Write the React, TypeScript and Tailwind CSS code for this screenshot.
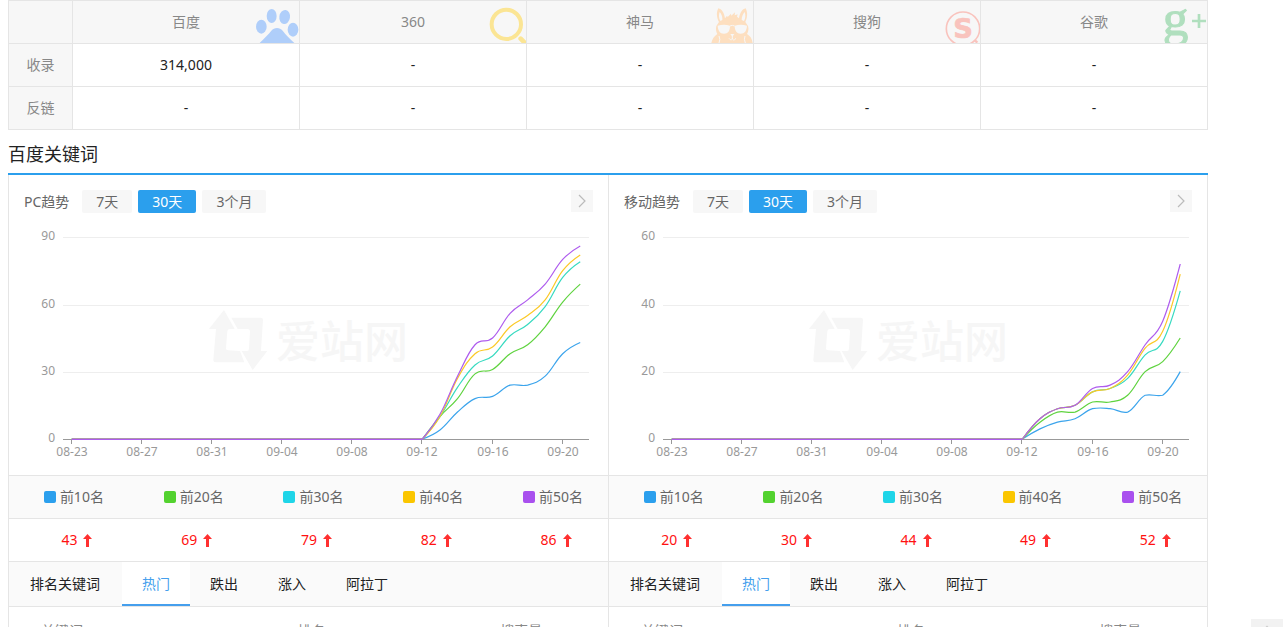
import { ReactNode, useState } from "react";
import clsx from "clsx";

const ENGINES: { name: string; indexed: string; backlinks: string; icon: ReactNode }[] = [
  { name: "百度", indexed: "314,000", backlinks: "-", icon: <BaiduIcon /> },
  { name: "360", indexed: "-", backlinks: "-", icon: <SearchIcon /> },
  { name: "神马", indexed: "-", backlinks: "-", icon: <ShenmaIcon /> },
  { name: "搜狗", indexed: "-", backlinks: "-", icon: <SogouIcon /> },
  { name: "谷歌", indexed: "-", backlinks: "-", icon: <GoogleIcon /> },
];

const LEGEND = [
  { label: "前10名", swatch: "bg-[#2b9fed]", line: "#3ba4ec" },
  { label: "前20名", swatch: "bg-[#53d22f]", line: "#5fd33f" },
  { label: "前30名", swatch: "bg-[#1fd5e8]", line: "#37dac0" },
  { label: "前40名", swatch: "bg-[#fbc600]", line: "#fbc926" },
  { label: "前50名", swatch: "bg-[#a950ee]", line: "#ae5cee" },
];

// values from 09-12 on, one list per legend entry; every day before is 0
const PC_SERIES = [
  [0, 4, 12, 18, 19, 24, 24, 28, 38, 43],
  [0, 10, 18, 29, 31, 38, 42, 50, 61, 69],
  [0, 10, 23, 33, 37, 46, 51, 59, 72, 79],
  [0, 10, 27, 38, 41, 50, 55, 62, 75, 82],
  [0, 11, 28, 42, 45, 56, 62, 69, 80, 86],
];

const MOBILE_SERIES = [
  [0, 3, 5, 6, 9, 9, 8, 13, 13, 20],
  [0, 5, 8, 8, 11, 11, 13, 20, 23, 30],
  [0, 6, 9, 10, 14, 15, 18, 25, 29, 44],
  [0, 6, 9, 10, 14, 15, 19, 27, 32, 49],
  [0, 6, 9, 10, 15, 16, 20, 28, 35, 52],
];

const DATES = ["08-23", "08-27", "08-31", "09-04", "09-08", "09-12", "09-16", "09-20"];
const RANGES = ["7天", "30天", "3个月"];
const TABS = ["热门", "跌出", "涨入", "阿拉丁"];

const ICON_CLASS = "absolute right-0 bottom-0 h-10 w-12";

function BaiduIcon() {
  return (
    <svg viewBox="33 9 144 120" className={ICON_CLASS} fill="#afcefa" aria-hidden="true">
      <ellipse cx="64" cy="80" rx="16" ry="21" />
      <ellipse cx="95" cy="48" rx="15" ry="21" />
      <ellipse cx="134" cy="51" rx="16" ry="21" transform="rotate(8 134 51)" />
      <ellipse cx="159" cy="89" rx="16" ry="21" />
      <path d="M59 129C74 114 86 102 94 92C103 81 119 81 128 92C138 106 150 116 163 129Z" />
    </svg>
  );
}

function SearchIcon() {
  return (
    <svg viewBox="24 9 144 120" className={ICON_CLASS} fill="none" stroke="#fbe594" aria-hidden="true">
      <circle cx="109" cy="73" r="44" strokeWidth="12" />
      <path d="M152 116L170 134" strokeWidth="14" strokeLinecap="round" />
    </svg>
  );
}

function ShenmaIcon() {
  return (
    <svg viewBox="16 9 144 120" className={ICON_CLASS} aria-hidden="true">
      <path
        fill="#fddfc0"
        d="M35 129C38 116 44 108 53 102C49 95 48 88 50 78L58 66C50 52 50 36 56 25C66 27 74 38 76 55L82 47L84 51L94 41L95 47L106 37L105 46L114 43L112 50C114 51 116 53 118 55C120 39 128 27 138 25C145 38 143 54 137 66L145 78C148 88 146 95 142 102C152 108 157 116 159 129Z"
      />
      <path fill="#f7f7f7" d="M60 36C66 43 69 51 68 60L62 63C57 54 57 44 60 36ZM135 36C138 45 138 54 133 63L126 60C126 51 129 42 135 36Z" />
      <path fill="#f7f7f7" d="M54 77Q73 71 91 77C91 92 85 101 73 101C60 101 55 91 54 77ZM105 77Q123 71 142 77C141 92 135 101 123 101C112 101 105 92 105 77Z" />
      <path fill="none" stroke="#f7f7f7" strokeWidth="3" d="M91 78Q98 74 105 78M58 108Q63 118 58 129M136 108Q132 118 137 129M88 115Q97 126 98 113Q100 126 109 115M98 113V105" />
      <path fill="#f7f7f7" d="M92 102H104L98 110Z" />
    </svg>
  );
}

function SogouIcon() {
  return (
    <svg viewBox="7 9 144 120" className={ICON_CLASS} aria-hidden="true">
      <circle cx="100" cy="86" r="50" fill="none" stroke="#f9c3bd" strokeWidth="5" />
      <text x="100" y="115" textAnchor="middle" fontFamily="DejaVu Sans" fontWeight="700" fontSize="82" fill="#f9c3bd" stroke="#f9c3bd" strokeWidth="2">
        S
      </text>
      <path d="M136 121L143 128" stroke="#f9c3bd" strokeWidth="7" />
    </svg>
  );
}

function GoogleIcon() {
  return (
    <svg viewBox="27 9 144 120" className={ICON_CLASS} fill="#b0dfbe" aria-hidden="true">
      <text x="38" y="105" fontFamily="Liberation Serif" fontWeight="400" fontSize="154" stroke="#b0dfbe" strokeWidth="3">
        g
      </text>
      <path d="M143 42H151V59H168V67H151V84H143V67H126V59H143Z" />
    </svg>
  );
}

const CELL = "border border-[#e5e5e5] p-0 text-center font-normal";

const EngineTable = () => (
  <table className="w-full table-fixed border-collapse text-sm">
    <thead>
      <tr className="h-[43px] bg-[#f7f7f7] text-[#888]">
        <td className={clsx(CELL, "w-16")} />
        {ENGINES.map((engine) => (
          <th key={engine.name} scope="col" className={clsx(CELL, "relative overflow-hidden")}>
            {engine.name}
            {engine.icon}
          </th>
        ))}
      </tr>
    </thead>
    <tbody className="text-[#222]">
      <tr className="h-[43px]">
        <th scope="row" className={clsx(CELL, "bg-[#f7f7f7] text-[#888]")}>收录</th>
        {ENGINES.map((engine) => (
          <td key={engine.name} className={CELL}>{engine.indexed}</td>
        ))}
      </tr>
      <tr className="h-[43px]">
        <th scope="row" className={clsx(CELL, "bg-[#f7f7f7] text-[#888]")}>反链</th>
        {ENGINES.map((engine) => (
          <td key={engine.name} className={CELL}>{engine.backlinks}</td>
        ))}
      </tr>
    </tbody>
  </table>
);

const AXIS_LEFT = 54;
const AXIS_RIGHT = 580;
const AXIS_TOP = 24;
const AXIS_BOTTOM = 226;
const DAYS = 30;
const DAY_WIDTH = (AXIS_RIGHT - AXIS_LEFT) / DAYS;

const dayX = (day: number) => AXIS_LEFT + DAY_WIDTH * (day + 0.5);

// lets the curve leave the span between two days by a pixel or so at most
const clamp = (value: number, a: number, b: number) =>
  Math.max(Math.min(a, b) - 1.5, Math.min(Math.max(a, b) + 1.5, value));

const curve = (values: number[], max: number) => {
  const ys = values.map((v) => AXIS_BOTTOM - (v / max) * (AXIS_BOTTOM - AXIS_TOP));
  const slope = (i: number) => {
    if (i === 0 || i === ys.length - 1) return 0;
    return (ys[i + 1] - ys[i - 1]) / 2;
  };
  const first = DAYS - values.length;
  const reach = 0.4;
  let d = `M${dayX(0)} ${AXIS_BOTTOM}L${dayX(first)} ${ys[0]}`;
  for (let i = 0; i < ys.length - 1; i++) {
    const x = dayX(first + i);
    const last = i === ys.length - 2;
    const y1 = clamp(ys[i] + slope(i) * reach, ys[i], ys[i + 1]);
    const y2 = last ? ys[i + 1] : clamp(ys[i + 1] - slope(i + 1) * reach, ys[i], ys[i + 1]);
    const x1 = i === 0 ? x : x + DAY_WIDTH * reach;
    const x2 = last ? x + DAY_WIDTH : x + DAY_WIDTH * (1 - reach);
    d += `C${x1} ${y1} ${x2} ${y2} ${x + DAY_WIDTH} ${ys[i + 1]}`;
  }
  return d;
};

const TrendChart = ({ title, series, max }: { title: string; series: number[][]; max: number }) => (
  <svg viewBox="0 0 598 262" className="block w-full max-w-[598px]" role="img" aria-label={title}>
    <g fill="#f6f6f6">
      <g transform="translate(-9 -43) scale(0.3333)">
        <path d="M672 420L627 477H648L640 570Q640 577 647 577H733L720 543L684 541Q678 541 678 535L682 484Q683 477 690 477H704Z" />
        <path d="M694 443H783Q789 443 789 450L783 543H802L758 600L725 543H741Q747 543 747 536L750 485Q750 477 743 477H713Z" />
      </g>
      <text x="267" y="145" fontSize="44" fontWeight="500">
        爱站网
      </text>
    </g>
    {[226, 159, 92, 24].map((y, step) => (
      <g key={step}>
        <path
          d={`M${AXIS_LEFT} ${y + 0.5}H${AXIS_RIGHT}`}
          stroke={step === 0 ? "#999" : "#eee"}
        />
        <text x="46" y={y + 3} textAnchor="end" fontSize="12" fill="#999">
          {(max / 3) * step}
        </text>
      </g>
    ))}
    {DATES.map((date, i) => {
      const x = Math.round(dayX(i * 4));
      return (
        <g key={date}>
          <path d={`M${x - 0.5} 227V231`} stroke="#999" />
          <text x={x} y="243" textAnchor="middle" fontSize="12" fill="#999">
            {date}
          </text>
        </g>
      );
    })}
    {series.map((values, i) => (
      <path key={i} d={curve(values, max)} fill="none" stroke={LEGEND[i].line} strokeWidth="1.2" />
    ))}
    <path
      d={`M${dayX(0)} ${AXIS_BOTTOM + 0.5}H${dayX(20)}`}
      stroke={LEGEND[LEGEND.length - 1].line}
    />
  </svg>
);

const UpArrow = () => (
  <svg viewBox="0 0 9 13" className="h-[13px] w-[9px] fill-[#ff3030]" aria-label="上升">
    <path d="M4.5 0L9 5H6V13H3V5H0Z" />
  </svg>
);

const TrendPanel = ({
  title,
  series,
  max,
  className,
}: {
  title: string;
  series: number[][];
  max: number;
  className?: string;
}) => {
  const [range, setRange] = useState("30天");
  const [tab, setTab] = useState("热门");

  return (
    <section className={clsx("min-w-0 border-l border-[#e5e5e5]", className)}>
      <div className="flex items-center px-[15px] pt-[15px] text-sm">
        <h3 className="mr-[13px] leading-[23px] text-[#666]">{title}</h3>
        <div className="flex gap-1.5">
          {RANGES.map((item) => (
            <button
              key={item}
              type="button"
              onClick={() => setRange(item)}
              className={clsx(
                "h-[23px] rounded-xs px-3.5 leading-[23px]",
                range === item ? "bg-[#2b9fed] text-white" : "bg-[#f7f7f7] text-[#666]"
              )}
            >
              {item}
            </button>
          ))}
        </div>
        <button
          type="button"
          aria-label="更多"
          className="ml-auto flex size-[22px] items-center justify-center self-start bg-[#f7f7f7]"
        >
          <svg viewBox="0 0 8 14" className="h-3.5 w-2" fill="none" stroke="#bbb" strokeWidth="1.2">
            <path d="M1 1L7 7L1 13" />
          </svg>
        </button>
      </div>

      <TrendChart title={title} series={series} max={max} />

      <table className="w-full table-fixed border-collapse text-sm">
        <thead>
          <tr className="h-[43px] border-y border-[#e5e5e5] bg-[#fafafa] text-[#666]">
            {LEGEND.map((item) => (
              <th key={item.label} scope="col" className="p-0 pl-2.5 font-normal">
                <span className="flex items-center justify-center gap-1">
                  <span className={clsx("size-3 rounded-xs", item.swatch)} />
                  {item.label}
                </span>
              </th>
            ))}
          </tr>
        </thead>
        <tbody>
          <tr className="h-[43px] border-b border-[#e5e5e5] text-[#f11]">
            {series.map((values, i) => (
              <td key={i} className="p-0 pl-4">
                <span className="flex items-center justify-center gap-1.5">
                  {values[values.length - 1]}
                  <UpArrow />
                </span>
              </td>
            ))}
          </tr>
        </tbody>
      </table>

      <div className="flex h-[45px] items-stretch border-b border-[#e5e5e5] bg-[#fafafa] text-sm text-[#222]">
        <h4 className="flex items-center pr-[22px] pl-[21px]">排名关键词</h4>
        {TABS.map((item) => (
          <button
            key={item}
            type="button"
            onClick={() => setTab(item)}
            className={clsx(
              "border-b-2 px-5 pt-0.5",
              tab === item ? "border-[#459fed] bg-white text-[#459fed]" : "border-transparent"
            )}
          >
            {item}
          </button>
        ))}
      </div>

      <table className="w-full table-fixed border-collapse text-sm">
        <thead>
          <tr className="h-12 text-[#888]">
            <th scope="col" className="w-[30%] p-0 pl-8 text-left font-normal">关键词</th>
            <th scope="col" className="p-0 text-center font-normal">排名</th>
            <th scope="col" className="w-[29%] p-0 text-center font-normal">搜索量</th>
          </tr>
        </thead>
      </table>
    </section>
  );
};

const App = () => {
  return (
    <div className="h-screen overflow-hidden bg-white font-['Noto_Sans','Noto_Sans_CJK_SC',sans-serif]">
      <main className="ml-2 max-w-[1200px]">
        <EngineTable />
        <h2 className="border-b-2 border-[#2b9fed] pt-2.5 pb-[5px] text-lg leading-7 text-[#222]">
          百度关键词
        </h2>
        <div className="grid grid-cols-2">
          <TrendPanel title="PC趋势" series={PC_SERIES} max={90} />
          <TrendPanel title="移动趋势" series={MOBILE_SERIES} max={60} className="border-r" />
        </div>
      </main>
      <button
        type="button"
        aria-label="返回顶部"
        className="fixed right-0 -bottom-6 flex h-8 w-8 justify-center bg-[#f2f2f2] pt-1.5"
      >
        <svg viewBox="0 0 12 8" className="h-2 w-3" fill="none" stroke="#ccc" strokeWidth="2">
          <path d="M1 7L6 2L11 7" />
        </svg>
      </button>
    </div>
  );
};

export default App;
